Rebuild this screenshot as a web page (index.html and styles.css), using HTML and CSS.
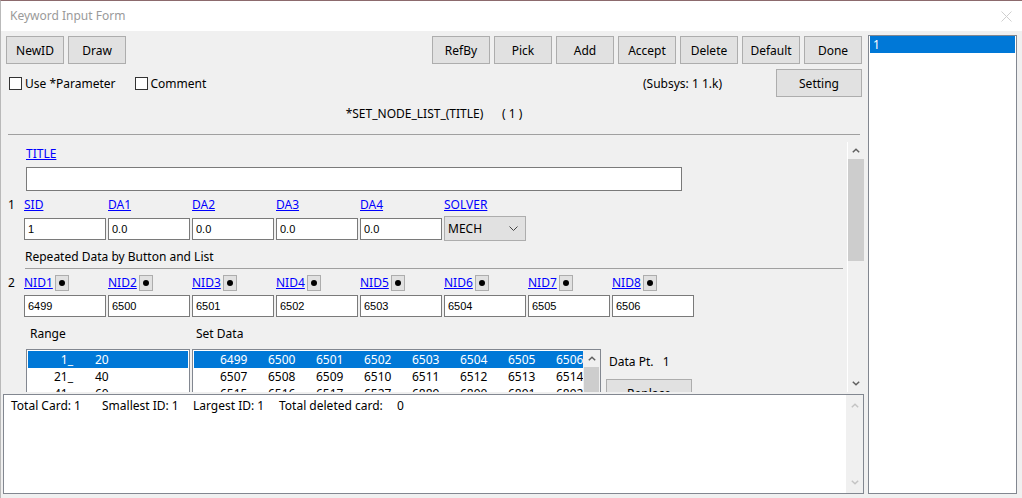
FILE: index.html
```html
<!DOCTYPE html>
<html lang="en">
<head>
    <meta charset="UTF-8">
    <title>Keyword Input Form</title>
    <link rel="stylesheet" href="styles.css">
</head>
<body>
<div class="window">
    <div class="titlebar">
        <span class="title">Keyword Input Form</span>
        <svg class="close" width="11" height="11" viewBox="0 0 11 11"><path d="M0.5 0.5L10.5 10.5M10.5 0.5L0.5 10.5" stroke="#cfcfcf" stroke-width="1" fill="none"/></svg>
    </div>
    <div class="frame">
        <div class="main">
            <div class="toolbar">
                <div class="btn-group">
                    <button class="btn">NewID</button>
                    <button class="btn">Draw</button>
                </div>
                <div class="btn-group">
                    <button class="btn">RefBy</button>
                    <button class="btn">Pick</button>
                    <button class="btn">Add</button>
                    <button class="btn">Accept</button>
                    <button class="btn">Delete</button>
                    <button class="btn">Default</button>
                    <button class="btn">Done</button>
                </div>
            </div>

            <div class="options">
                <label class="check"><span class="box"></span>Use *Parameter</label>
                <label class="check"><span class="box"></span>Comment</label>
                <span class="subsys">(Subsys: 1 1.k)</span>
                <button class="btn btn-wide">Setting</button>
            </div>

            <div class="keyword">*SET_NODE_LIST_(TITLE)&nbsp;&nbsp;&nbsp;&nbsp;&nbsp;&nbsp;( 1 )</div>
            <div class="rule"></div>

            <div class="scroll-panel">
                <div class="form">
                    <div class="title-label"><a class="link">TITLE</a></div>
                    <input class="field title-input" type="text" value="">

                    <div class="grid labels">
                        <span class="row-num">1</span>
                        <a class="link">SID</a>
                        <a class="link">DA1</a>
                        <a class="link">DA2</a>
                        <a class="link">DA3</a>
                        <a class="link">DA4</a>
                        <a class="link">SOLVER</a>
                    </div>
                    <div class="grid inputs">
                        <span></span>
                        <input class="field" type="text" value="1">
                        <input class="field" type="text" value="0.0">
                        <input class="field" type="text" value="0.0">
                        <input class="field" type="text" value="0.0">
                        <input class="field" type="text" value="0.0">
                        <div class="combo">MECH
                            <svg width="9" height="5" viewBox="0 0 9 5"><path d="M0.5 0.5L4.5 4.5L8.5 0.5" stroke="#444" stroke-width="1" fill="none"/></svg>
                        </div>
                    </div>

                    <div class="section-label">Repeated Data by Button and List</div>
                    <div class="section-rule"></div>

                    <div class="grid labels">
                        <span class="row-num">2</span>
                        <span class="nid"><a class="link">NID1</a><span class="pin"></span></span>
                        <span class="nid"><a class="link">NID2</a><span class="pin"></span></span>
                        <span class="nid"><a class="link">NID3</a><span class="pin"></span></span>
                        <span class="nid"><a class="link">NID4</a><span class="pin"></span></span>
                        <span class="nid"><a class="link">NID5</a><span class="pin"></span></span>
                        <span class="nid"><a class="link">NID6</a><span class="pin"></span></span>
                        <span class="nid"><a class="link">NID7</a><span class="pin"></span></span>
                        <span class="nid"><a class="link">NID8</a><span class="pin"></span></span>
                    </div>
                    <div class="grid inputs">
                        <span></span>
                        <input class="field" type="text" value="6499">
                        <input class="field" type="text" value="6500">
                        <input class="field" type="text" value="6501">
                        <input class="field" type="text" value="6502">
                        <input class="field" type="text" value="6503">
                        <input class="field" type="text" value="6504">
                        <input class="field" type="text" value="6505">
                        <input class="field" type="text" value="6506">
                    </div>

                    <div class="list-area">
                        <div class="range-col">
                            <div class="list-title">Range</div>
                            <div class="listbox">
                                <div class="list-row selected"><span class="r-from">1_</span><span class="r-to">20</span></div>
                                <div class="list-row"><span class="r-from">21_</span><span class="r-to">40</span></div>
                                <div class="list-row"><span class="r-from">41_</span><span class="r-to">60</span></div>
                            </div>
                        </div>
                        <div class="data-col">
                            <div class="list-title">Set Data</div>
                            <div class="listbox data-box">
                                <div class="data-rows">
                                    <div class="list-row selected data-row"><span>6499</span><span>6500</span><span>6501</span><span>6502</span><span>6503</span><span>6504</span><span>6505</span><span>6506</span></div>
                                    <div class="list-row data-row"><span>6507</span><span>6508</span><span>6509</span><span>6510</span><span>6511</span><span>6512</span><span>6513</span><span>6514</span></div>
                                    <div class="list-row data-row"><span>6515</span><span>6516</span><span>6517</span><span>6527</span><span>6889</span><span>6890</span><span>6891</span><span>6892</span></div>
                                </div>
                                <div class="mini-scroll">
                                    <div class="arrow-box"><svg width="8" height="5" viewBox="0 0 8 5"><path d="M0.8 4.3L4 1.2L7.2 4.3" stroke="#606060" stroke-width="1.5" fill="none"/></svg></div>
                                    <div class="mini-thumb"></div>
                                </div>
                            </div>
                        </div>
                        <div class="data-side">
                            <div class="data-pt">Data Pt.&nbsp;&nbsp;&nbsp;1</div>
                            <button class="btn btn-wide">Replace</button>
                        </div>
                    </div>
                </div>
                <div class="vscroll">
                    <div class="arrow-box"><svg width="8" height="5" viewBox="0 0 8 5"><path d="M0.8 4.3L4 1.2L7.2 4.3" stroke="#606060" stroke-width="1.5" fill="none"/></svg></div>
                    <div class="thumb"></div>
                    <div class="track"></div>
                    <div class="arrow-box"><svg width="8" height="5" viewBox="0 0 8 5"><path d="M0.8 0.7L4 3.8L7.2 0.7" stroke="#606060" stroke-width="1.5" fill="none"/></svg></div>
                </div>
            </div>

            <div class="status">
                <div class="status-text">
                    <span class="stat stat-total">Total Card: 1</span>
                    <span class="stat stat-small">Smallest ID: 1</span>
                    <span class="stat stat-large">Largest ID: 1</span>
                    <span class="stat stat-deleted">Total deleted card:</span>
                    <span class="stat">0</span>
                </div>
                <div class="vscroll status-scroll">
                    <div class="arrow-box"><svg width="8" height="5" viewBox="0 0 8 5"><path d="M0.8 4.3L4 1.2L7.2 4.3" stroke="#c4c4c4" stroke-width="1.5" fill="none"/></svg></div>
                    <div class="track"></div>
                    <div class="arrow-box"><svg width="8" height="5" viewBox="0 0 8 5"><path d="M0.8 0.7L4 3.8L7.2 0.7" stroke="#c4c4c4" stroke-width="1.5" fill="none"/></svg></div>
                </div>
            </div>
        </div>

        <div class="side-list">
            <div class="side-item selected">1</div>
        </div>
    </div>
</div>
</body>
</html>
```

FILE: styles.css
```css
* {
    box-sizing: border-box;
}
body {
    margin: 0;
    font-family: "Noto Sans", "Noto Sans CJK SC", sans-serif;
    font-size: 12px;
    color: #000;
    background-color: #f0f0f0;
}
.window {
    width: 1022px;
    height: 498px;
    border-top: 1px solid #8c6a6d;
    border-left: 1px solid #b9b9b9;
    background-color: #f0f0f0;
    overflow: hidden;
}
.titlebar {
    height: 30px;
    background-color: #fff;
    display: flex;
    align-items: center;
    justify-content: space-between;
    padding: 0 10px 0 9px;
}
.title {
    color: #9a9a9a;
    line-height: 16px;
}
.close {
    margin-top: 1px;
}
.frame {
    display: flex;
    height: 467px;
}
.main {
    width: 863px;
    display: flex;
    flex-direction: column;
}

/* buttons */
.btn {
    font-family: "Noto Sans", "Noto Sans CJK SC", sans-serif;
    font-size: 12px;
    color: #000;
    width: 58px;
    height: 28px;
    padding: 0;
    background-color: #e1e1e1;
    border: 1px solid #adadad;
    border-radius: 0;
}
.btn-wide {
    width: 86px;
}
.toolbar {
    display: flex;
    justify-content: space-between;
    padding: 5px 2px 0 5px;
}
.btn-group {
    display: flex;
    gap: 4px;
}
.options {
    display: flex;
    align-items: center;
    margin-top: 5px;
    padding: 0 2px 0 8px;
}
.check {
    display: flex;
    align-items: center;
    gap: 3px;
    margin-right: 19px;
}
.box {
    width: 13px;
    height: 13px;
    border: 1px solid #333;
    background-color: #fff;
}
.subsys {
    margin-left: auto;
    margin-right: 54px;
}
.keyword {
    margin-top: 9px;
    line-height: 16px;
    text-align: center;
    padding: 0 2px 0 5px;
}
.rule {
    margin: 12px 0 0 7px;
    width: 852px;
    height: 1px;
    background-color: #a0a0a0;
}

/* scrolled form */
.scroll-panel {
    margin: 7px 0 0 7px;
    width: 856px;
    height: 250px;
    display: flex;
    overflow: hidden;
}
.form {
    flex: 1;
    height: 250px;
    overflow: hidden;
    padding-top: 4px;
}
.link {
    color: #0000ff;
    text-decoration: underline;
    line-height: 16px;
}
.title-label {
    margin-left: 18px;
    height: 16px;
    line-height: 16px;
}
.field {
    font-family: "Liberation Sans", Arial, sans-serif;
    font-size: 11px;
    color: #000;
    height: 22px;
    width: 82px;
    padding: 0 3px;
    border: 1px solid #7a7a7a;
    background-color: #fff;
    outline: none;
}
.title-input {
    display: block;
    margin: 5px 0 0 18px;
    width: 656px;
    height: 24px;
}
.grid {
    display: grid;
    grid-template-columns: 16px repeat(8, 84px);
    align-items: center;
}
.labels {
    margin-top: 6px;
    height: 16px;
}
.inputs {
    margin-top: 4px;
    height: 22px;
}
.row-num {
    line-height: 16px;
}
.combo {
    width: 82px;
    height: 25px;
    margin-top: -1px;
    align-self: start;
    background-color: #e1e1e1;
    border: 1px solid #adadad;
    display: flex;
    align-items: center;
    justify-content: space-between;
    padding: 0 7px 0 3px;
    font-size: 12px;
}
.section-label {
    margin: 10px 0 0 17px;
    line-height: 16px;
}
.section-rule {
    margin: 3px 0 0 17px;
    width: 818px;
    height: 1px;
    background-color: #a0a0a0;
}
.nid {
    display: flex;
    align-items: center;
    gap: 2px;
}
.pin {
    width: 14px;
    height: 16px;
    background-color: #e1e1e1;
    border: 1px solid #adadad;
    display: flex;
    align-items: center;
    justify-content: center;
}
.pin::after {
    content: "";
    width: 6px;
    height: 6px;
    border-radius: 50%;
    background-color: #000;
}

/* list boxes */
.list-area {
    display: flex;
    margin: 9px 0 0 18px;
}
.list-title {
    line-height: 16px;
    padding-left: 4px;
    margin-bottom: 7px;
}
.range-col {
    width: 164px;
}
.data-col {
    width: 409px;
    margin-left: 2px;
}
.listbox {
    height: 80px;
    border: 1px solid #828790;
    background-color: #fff;
    padding: 1px;
}
.list-row {
    height: 17px;
    line-height: 17px;
    display: flex;
    white-space: nowrap;
    overflow: hidden;
}
.list-row.selected {
    background-color: #0078d7;
    color: #fff;
}
.r-from {
    width: 45px;
    text-align: right;
}
.r-to {
    padding-left: 22px;
}
.data-box {
    display: flex;
    padding-right: 0;
}
.data-rows {
    flex: 1;
    overflow: hidden;
}
.data-row {
    padding-left: 26px;
}
.data-row span {
    flex: 0 0 48px;
}
.mini-scroll {
    width: 17px;
    background-color: #f0f0f0;
    margin-top: -1px;
}
.mini-thumb {
    height: 60px;
    margin: 0 1px;
    background-color: #cdcdcd;
}
.data-side {
    margin-left: 5px;
    padding-top: 28px;
}
.data-pt {
    line-height: 16px;
    padding-left: 3px;
    margin-bottom: 9px;
}

/* scrollbars */
.vscroll {
    width: 17px;
    display: flex;
    flex-direction: column;
    background-color: #f0f0f0;
    border-left: 1px solid #fff;
}
.arrow-box {
    height: 17px;
    display: flex;
    align-items: center;
    justify-content: center;
}
.thumb {
    height: 102px;
    background-color: #cdcdcd;
}
.track {
    flex: 1;
}

/* status box */
.status {
    margin: 2px 0 0 2px;
    width: 861px;
    height: 100px;
    border: 1px solid #828790;
    background-color: #fff;
    display: flex;
}
.status-text {
    flex: 1;
    display: flex;
    align-items: flex-start;
    padding: 3px 0 0 7px;
    line-height: 16px;
    white-space: nowrap;
}
.stat-total {
    width: 91px;
}
.stat-small {
    width: 91px;
}
.stat-large {
    width: 86px;
}
.stat-deleted {
    width: 118px;
}
.status-scroll {
    border-left: none;
    padding: 2px 0;
}

/* right list */
.side-list {
    margin: 4px 0 0 4px;
    width: 149px;
    height: 459px;
    border: 1px solid #828790;
    background-color: #fff;
    padding: 0 1px;
}
.side-item {
    height: 17px;
    line-height: 17px;
    padding-left: 3px;
}
.side-item.selected {
    background-color: #0078d7;
    color: #fff;
}
```
